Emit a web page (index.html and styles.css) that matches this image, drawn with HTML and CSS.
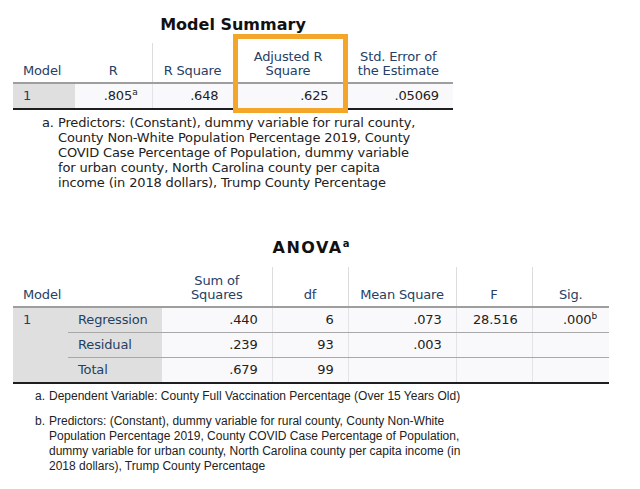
FILE: index.html
```html
<!DOCTYPE html>
<html>
<head>
<meta charset="utf-8">
<link rel="stylesheet" href="styles.css">
</head>
<body>
<section class="block block-ms">
  <h2 class="title">Model Summary</h2>
  <div class="table-wrap">
    <table class="spss ms">
      <colgroup>
        <col style="width:62px"><col style="width:77px"><col style="width:81px"><col style="width:110px"><col style="width:110px">
      </colgroup>
      <thead>
        <tr>
          <th class="left">Model</th>
          <th class="nosep">R</th>
          <th>R Square</th>
          <th>Adjusted R<br>Square</th>
          <th>Std. Error of<br>the Estimate</th>
        </tr>
      </thead>
      <tbody>
        <tr class="last">
          <td class="lab">1</td>
          <td class="num nosep">.805<sup>a</sup></td>
          <td class="num">.648</td>
          <td class="num">.625</td>
          <td class="num">.05069</td>
        </tr>
      </tbody>
    </table>
    <div class="highlight"></div>
  </div>
  <ol class="notes notes-ms">
    <li><span class="mark">a.</span><span class="txt">Predictors: (Constant), dummy variable for rural county, County Non-White Population Percentage 2019, County COVID Case Percentage of Population, dummy variable for urban county, North Carolina county per capita income (in 2018 dollars), Trump County Percentage</span></li>
  </ol>
</section>

<section class="block block-anova">
  <h2 class="title title-anova">ANOVA<sup>a</sup></h2>
  <table class="spss anova">
    <colgroup>
      <col style="width:55px"><col style="width:94px"><col style="width:110px"><col style="width:76px"><col style="width:108px"><col style="width:76px"><col style="width:77px">
    </colgroup>
    <thead>
      <tr>
        <th class="left" colspan="2">Model</th>
        <th class="nosep">Sum of<br>Squares</th>
        <th>df</th>
        <th>Mean Square</th>
        <th>F</th>
        <th>Sig.</th>
      </tr>
    </thead>
    <tbody>
      <tr>
        <td class="lab" rowspan="3">1</td>
        <td class="lab sub">Regression</td>
        <td class="num nosep">.440</td>
        <td class="num">6</td>
        <td class="num">.073</td>
        <td class="num">28.516</td>
        <td class="num sig">.000<sup>b</sup></td>
      </tr>
      <tr>
        <td class="lab sub">Residual</td>
        <td class="num nosep">.239</td>
        <td class="num">93</td>
        <td class="num">.003</td>
        <td class="num"></td>
        <td class="num"></td>
      </tr>
      <tr class="last">
        <td class="lab sub">Total</td>
        <td class="num nosep">.679</td>
        <td class="num">99</td>
        <td class="num"></td>
        <td class="num"></td>
        <td class="num"></td>
      </tr>
    </tbody>
  </table>
  <ol class="notes notes-anova">
    <li><span class="mark">a.</span><span class="txt">Dependent Variable: County Full Vaccination Percentage (Over 15 Years Old)</span></li>
    <li><span class="mark">b.</span><span class="txt">Predictors: (Constant), dummy variable for rural county, County Non-White Population Percentage 2019, County COVID Case Percentage of Population, dummy variable for urban county, North Carolina county per capita income (in 2018 dollars), Trump County Percentage</span></li>
  </ol>
</section>
</body>
</html>
```
FILE: styles.css
```css
html, body {
  margin: 0;
  padding: 0;
  background: #ffffff;
}
body {
  width: 640px;
  height: 489px;
  overflow: hidden;
  font-family: "DejaVu Sans", sans-serif;
  font-size: 13px;
  letter-spacing: -0.15px;
  color: #222222;
}
.block {
  padding-left: 13px;
}
.block-ms {
  padding-top: 14px;
}
.title {
  margin: 0;
  font-size: 16px;
  font-weight: bold;
  line-height: 22px;
  letter-spacing: 0;
  color: #111111;
  text-align: center;
}
.block-ms .title {
  width: 440px;
}
.title-anova {
  width: 596px;
  letter-spacing: 1.5px;
}
.title sup {
  font-size: 10px;
  vertical-align: 6px;
  line-height: 0;
  letter-spacing: 0;
}
.table-wrap {
  position: relative;
  width: 440px;
  padding-top: 7px;
}
.spss {
  border-collapse: collapse;
  table-layout: fixed;
}
.ms { width: 440px; }
.anova { width: 596px; margin-top: 8px; }
.spss th {
  font-weight: normal;
  color: #264066;
  vertical-align: bottom;
  text-align: center;
  line-height: 14px;
  padding: 0 4px 4px;
  border-left: 1px solid #dcdcdc;
  border-bottom: 2px solid #9e9e9e;
}
.spss th.left {
  text-align: left;
  padding-left: 10px;
  border-left: none;
}
.spss th.nosep { border-left: none; }
.ms thead tr { height: 40px; }
.anova thead tr { height: 40px; }
.spss td {
  height: 24px;
  padding: 0;
  line-height: 14px;
  background: #f9f9fb;
  border-left: 1px solid #e4e4e6;
  border-bottom: 1px solid #a8a8a8;
}
.spss tr.last td { border-bottom: 2px solid #1e1e1e; }
.spss td.lab {
  background: #dfdfdf;
  color: #253f63;
  border-left: none;
  padding-left: 10px;
  vertical-align: middle;
}
.spss td.lab[rowspan] {
  vertical-align: top;
  padding-top: 5px;
  border-bottom: 2px solid #1e1e1e;
}
.spss td.sub { padding-left: 10px; }
.spss td.nosep { border-left: none; }
.spss td.num {
  text-align: right;
  padding-right: 14px;
  color: #222222;
}
.spss td.sig { padding-right: 12px; }
.spss sup {
  font-size: 9px;
  line-height: 0;
  vertical-align: 5px;
}
.highlight {
  position: absolute;
  left: 220px;
  top: -2px;
  width: 105px;
  height: 69px;
  border: 5px solid #f4a62a;
}
.notes {
  list-style: none;
  margin: 0;
  padding: 0;
}
.notes li {
  display: flex;
  line-height: 15px;
}
.notes .mark { flex: none; }
.notes-ms {
  padding: 5px 0 0 29px;
  width: 381px;
}
.notes-ms .mark { width: 16px; }
.block-anova {
  padding-top: 47px;
}
.notes-anova {
  padding: 5px 0 0 22px;
  width: 428px;
  font-family: "Liberation Sans", sans-serif;
  font-size: 12px;
  letter-spacing: 0;
}
.notes-anova li + li { margin-top: 10px; }
.notes-anova .mark { width: 14px; }
```
